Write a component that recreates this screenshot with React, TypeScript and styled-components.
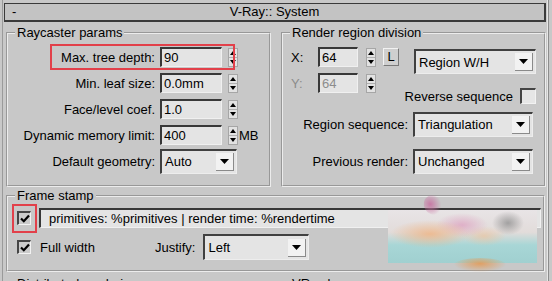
import * as React from "react";
import styled, { createGlobalStyle } from "styled-components";

const GlobalStyle = createGlobalStyle`
  html, body {
    margin: 0;
    padding: 0;
    background: #c8c8c8;
  }
  * {
    box-sizing: border-box;
  }
`;

const Page = styled.div`
  position: relative;
  width: 552px;
  height: 281px;
  overflow: hidden;
  background: #c8c8c8;
  font-family: "Liberation Sans", Arial, sans-serif;
  font-size: 13px;
  color: #000;
`;

const Rollout = styled.div`
  margin-left: 2px;
  width: 547px;
  height: 100%;
  padding-top: 3px;
  border-left: 1px solid #9a9a9a;
  border-right: 1px solid #8c8c8c;
  box-shadow: inset -1px 0 0 #e6e6e6;
`;

const TitleBar = styled.div`
  display: grid;
  grid-template-columns: 1fr auto 1fr;
  align-items: center;
  margin-left: 1px;
  width: 542px;
  height: 19px;
  border: 1px solid #3a3a3a;
  border-right-width: 2px;
  border-bottom-width: 2px;
  background: #c3c3c3;
  line-height: 16px;
`;

const Collapse = styled.span`
  padding-left: 7px;
`;

const Columns = styled.div`
  display: flex;
  gap: 10px;
  margin: 3px 0 0 3px;
`;

const Group = styled.fieldset<{ $w: number; $h: number }>`
  margin: 0;
  padding: 0;
  min-width: 0;
  width: ${(p) => p.$w}px;
  height: ${(p) => p.$h}px;
  border: 2px groove #ececec;
`;

const Legend = styled.legend`
  margin-left: 7px;
  padding: 0 2px;
  line-height: 15px;
`;

const Stack = styled.div<{ $pt: number }>`
  display: flex;
  flex-direction: column;
  padding-top: ${(p) => p.$pt}px;
`;

const Row = styled.div<{ $h: number; $mt?: number; $pl?: number }>`
  display: flex;
  align-items: center;
  height: ${(p) => p.$h}px;
  margin-top: ${(p) => p.$mt ?? 0}px;
  padding-left: ${(p) => p.$pl ?? 0}px;
  white-space: nowrap;
`;

const Label = styled.span<{ $w?: number; $left?: boolean; $dim?: boolean }>`
  flex: none;
  width: ${(p) => (p.$w ? `${p.$w}px` : "auto")};
  text-align: ${(p) => (p.$left ? "left" : "right")};
  color: ${(p) => (p.$dim ? "#8c8c8c" : "#000")};
`;

const Field = styled.div<{ $w?: number; $ml?: number; $dim?: boolean }>`
  flex: ${(p) => (p.$w ? "none" : "1")};
  width: ${(p) => (p.$w ? `${p.$w}px` : "auto")};
  height: 20px;
  margin-left: ${(p) => p.$ml ?? 0}px;
  padding-left: 2px;
  border-top: 2px solid #383838;
  border-left: 2px solid #383838;
  border-right: 1px solid #f0f0f0;
  border-bottom: 1px solid #f0f0f0;
  background: #e4e4e4;
  line-height: 17px;
  color: ${(p) => (p.$dim ? "#8c8c8c" : "#000")};
  overflow: hidden;
`;

const SpinBox = styled.svg<{ $ml: number }>`
  flex: none;
  margin-left: ${(p) => p.$ml}px;
`;

const Unit = styled.span`
  margin-left: 1px;
`;

const LockButton = styled.div`
  flex: none;
  width: 16px;
  height: 18px;
  margin-left: 7px;
  border: 1px solid #f2f2f2;
  border-right-color: #7a7a7a;
  border-bottom-color: #7a7a7a;
  background: #cfcfcf;
  text-align: center;
  line-height: 16px;
`;

const Select = styled.div<{ $w: number; $ml?: number; $h?: number }>`
  flex: none;
  display: flex;
  align-items: center;
  justify-content: space-between;
  width: ${(p) => p.$w}px;
  height: ${(p) => p.$h ?? 25}px;
  margin-left: ${(p) => p.$ml ?? 0}px;
  padding: 0 2px 0 3px;
  border-top: 2px solid #404040;
  border-left: 2px solid #404040;
  border-right: 1px solid #ededed;
  border-bottom: 1px solid #ededed;
  background: #e4e4e4;
`;

const SelectArrow = styled.div`
  display: flex;
  align-items: center;
  justify-content: center;
  width: 18px;
  height: 18px;
  background: #f2f2f2;
  border-right: 1px solid #8a8a8a;
  border-bottom: 1px solid #8a8a8a;
`;

const TopGrid = styled.div`
  display: grid;
  grid-template-columns: 108px 1fr;
  grid-template-rows: 26px 34px;
  padding: 4px 8px 0 8px;
`;

const DropCell = styled.div`
  justify-self: end;
  align-self: start;
  margin-top: 5px;
`;

const ReverseCell = styled.div`
  display: flex;
  align-items: center;
  gap: 7px;
  justify-self: end;
  align-self: end;
`;

const CheckBox = styled.span<{ $checked?: boolean; $size: number }>`
  flex: none;
  display: flex;
  align-items: center;
  justify-content: center;
  width: ${(p) => p.$size}px;
  height: ${(p) => p.$size}px;
  border-top: 2px solid #454545;
  border-left: 2px solid #454545;
  border-right: 1px solid #f2f2f2;
  border-bottom: 1px solid #f2f2f2;
  background: ${(p) => (p.$checked ? "#cbcbcb" : "#e6e6e6")};
`;

const StampLeft = styled.div`
  flex: none;
  display: flex;
  align-items: center;
  gap: 9px;
  width: 138px;
`;

const Peek = styled.div<{ $mt: number }>`
  display: flex;
  gap: 10px;
  margin: ${(p) => p.$mt}px 0 0 3px;
`;

const Highlight = styled.div<{ $x: number; $y: number; $w: number; $h: number }>`
  position: absolute;
  left: ${(p) => p.$x}px;
  top: ${(p) => p.$y}px;
  width: ${(p) => p.$w}px;
  height: ${(p) => p.$h}px;
  border: 2px solid #e2404a;
  pointer-events: none;
`;

const Smudge = styled.div`
  position: absolute;
  left: 388px;
  top: 210px;
  width: 149px;
  height: 53px;
  background:
    radial-gradient(ellipse 16px 12px at 120px 13px, rgba(140, 140, 140, 0.75), transparent),
    radial-gradient(ellipse 40px 14px at 42px 24px, rgba(238, 184, 140, 0.9), transparent),
    radial-gradient(ellipse 26px 12px at 74px 15px, rgba(222, 168, 196, 0.85), transparent),
    radial-gradient(ellipse 22px 10px at 96px 26px, rgba(236, 196, 160, 0.7), transparent),
    linear-gradient(to bottom, #e8e4e6 0%, #e2dcda 42%, #a8d6d6 66%, #a0d0d0 100%);

  &::before {
    content: "";
    position: absolute;
    left: 36px;
    top: -15px;
    width: 18px;
    height: 20px;
    border-radius: 50%;
    background: radial-gradient(ellipse at 40% 40%, rgba(200, 110, 160, 0.85), transparent 70%);
    transform: rotate(-30deg);
  }

  &::after {
    content: "";
    position: absolute;
    left: 66px;
    top: 48px;
    width: 52px;
    height: 14px;
    border-radius: 50%;
    background: radial-gradient(ellipse at 50% 40%, rgba(226, 156, 90, 0.9), transparent 72%);
  }
`;

const Spinner = ({ ml, dim }: { ml: number; dim?: boolean }) => (
  <SpinBox $ml={ml} width="10" height="19" viewBox="0 0 10 19">
    <rect x="0.5" y="0.5" width="9" height="18" fill="#e2e2e2" stroke="#a6a6a6" />
    <line x1="1" y1="9.5" x2="9" y2="9.5" stroke="#b0b0b0" />
    <path d="M5 3 L8 7 H2 Z" fill={dim ? "#202020" : "#000"} />
    <path d="M5 16 L8 12 H2 Z" fill={dim ? "#202020" : "#000"} />
  </SpinBox>
);

const Arrow = () => (
  <SelectArrow>
    <svg width="9" height="5" viewBox="0 0 9 5">
      <path d="M0 0 H9 L4.5 5 Z" fill="#000" />
    </svg>
  </SelectArrow>
);

const Tick = () => (
  <svg width="10" height="9" viewBox="0 0 10 9">
    <path d="M1 4.5 L3.8 7.2 L9 1.5" fill="none" stroke="#000" strokeWidth="2.2" />
  </svg>
);

export default function App() {
  return (
    <Page>
      <GlobalStyle />
      <Rollout>
        <TitleBar>
          <Collapse>-</Collapse>
          <span>V-Ray:: System</span>
          <span />
        </TitleBar>

        <Columns>
          <Group $w={265} $h={162}>
            <Legend>Raycaster params</Legend>
            <Stack $pt={4}>
              <Row $h={26}>
                <Label $w={147}>Max. tree depth:</Label>
                <Field $w={62} $ml={5}>90</Field>
                <Spinner ml={6} />
              </Row>
              <Row $h={26}>
                <Label $w={147}>Min. leaf size:</Label>
                <Field $w={62} $ml={5}>0.0mm</Field>
                <Spinner ml={6} />
              </Row>
              <Row $h={26}>
                <Label $w={147}>Face/level coef.</Label>
                <Field $w={62} $ml={5}>1.0</Field>
                <Spinner ml={6} />
              </Row>
              <Row $h={26}>
                <Label $w={147}>Dynamic memory limit:</Label>
                <Field $w={62} $ml={5}>400</Field>
                <Spinner ml={6} />
                <Unit>MB</Unit>
              </Row>
              <Row $h={26}>
                <Label $w={147}>Default geometry:</Label>
                <Select $w={77} $ml={5}>
                  <span>Auto</span>
                  <Arrow />
                </Select>
              </Row>
            </Stack>
          </Group>

          <Group $w={265} $h={162}>
            <Legend>Render region division</Legend>
            <TopGrid>
              <Row $h={26}>
                <Label $w={27} $left>X:</Label>
                <Field $w={40}>64</Field>
                <Spinner ml={8} />
                <LockButton>L</LockButton>
              </Row>
              <DropCell>
                <Select $w={122}>
                  <span>Region W/H</span>
                  <Arrow />
                </Select>
              </DropCell>
              <Row $h={26} style={{ alignSelf: "start" }}>
                <Label $w={27} $left $dim>Y:</Label>
                <Field $w={40} $dim>64</Field>
                <Spinner ml={8} />
              </Row>
              <ReverseCell>
                <span>Reverse sequence</span>
                <CheckBox $size={16} />
              </ReverseCell>
            </TopGrid>
            <Row $h={26} $mt={7}>
              <Label $w={125}>Region sequence:</Label>
              <Select $w={120} $ml={5}>
                <span>Triangulation</span>
                <Arrow />
              </Select>
            </Row>
            <Row $h={26} $mt={11}>
              <Label $w={125}>Previous render:</Label>
              <Select $w={120} $ml={5}>
                <span>Unchanged</span>
                <Arrow />
              </Select>
            </Row>
          </Group>
        </Columns>

        <Peek $mt={1}>
          <Group $w={539} $h={84}>
            <Legend>Frame stamp</Legend>
            <Row $h={30} $pl={9}>
              <CheckBox $checked $size={14}>
                <Tick />
              </CheckBox>
              <Field $ml={8} style={{ marginRight: 2, paddingLeft: 8 }}>
                primitives: %primitives | render time: %rendertime
              </Field>
            </Row>
            <Row $h={28} $pl={9}>
              <StampLeft>
                <CheckBox $checked $size={14}>
                  <Tick />
                </CheckBox>
                <span>Full width</span>
              </StampLeft>
              <Label>Justify:</Label>
              <Select $w={106} $ml={8} $h={26}>
                <span>Left</span>
                <Arrow />
              </Select>
            </Row>
          </Group>
        </Peek>

        <Peek $mt={4}>
          <Group $w={265} $h={40}>
            <Legend>Distributed rendering</Legend>
          </Group>
          <Group $w={265} $h={40}>
            <Legend>VRay log</Legend>
          </Group>
        </Peek>
      </Rollout>

      <Highlight $x={50} $y={44} $w={185} $h={26} />
      <Highlight $x={12} $y={204} $w={25} $h={29} />
      <Smudge />
    </Page>
  );
}
